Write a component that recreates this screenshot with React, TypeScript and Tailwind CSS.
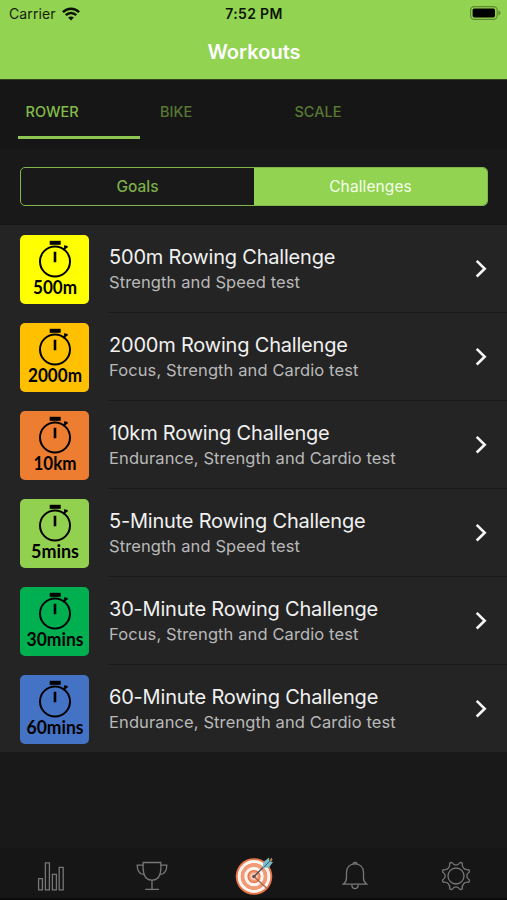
import { useState } from "react";

const tabs = ["ROWER", "BIKE", "SCALE"];

const challenges = [
  { label: "500m", width: 44, color: "bg-[#ffff00]", title: "500m Rowing Challenge", subtitle: "Strength and Speed test" },
  { label: "2000m", width: 54, color: "bg-[#ffc000]", title: "2000m Rowing Challenge", subtitle: "Focus, Strength and Cardio test" },
  { label: "10km", width: 43, color: "bg-[#ed7d31]", title: "10km Rowing Challenge", subtitle: "Endurance, Strength and Cardio test" },
  { label: "5mins", width: 48, color: "bg-[#92d050]", title: "5-Minute Rowing Challenge", subtitle: "Strength and Speed test" },
  { label: "30mins", width: 57, color: "bg-[#00b050]", title: "30-Minute Rowing Challenge", subtitle: "Focus, Strength and Cardio test" },
  { label: "60mins", width: 57, color: "bg-[#4472c4]", title: "60-Minute Rowing Challenge", subtitle: "Endurance, Strength and Cardio test" },
];

function WifiIcon() {
  return (
    <svg width="18" height="14" viewBox="0 0 18 14" fill="none" stroke="#0a1203" strokeWidth="2.6">
      <path d="M0.9 5.2C5.4 0.6 12.6 0.6 17.1 5.2" />
      <path d="M3.8 8.2C6.7 5.3 11.3 5.3 14.2 8.2" />
      <path d="M6.1 10.6C7.8 9 10.2 9 11.9 10.6L9 13.5Z" fill="#0a1203" stroke="none" />
    </svg>
  );
}

function BatteryIcon() {
  return (
    <svg width="31" height="14" viewBox="0 0 31 14">
      <rect x="0.6" y="0.6" width="26.6" height="12.8" rx="3.6" fill="none" stroke="#5f8a33" strokeWidth="1.2" />
      <rect x="2.6" y="2.6" width="22.4" height="8.8" rx="1.6" fill="#000" />
      <path d="M28.4 4.6c1.5.5 2 1.4 2 2.4s-.5 1.9-2 2.4z" fill="#5f8a33" />
    </svg>
  );
}

function TimerTile({ label, width, color }: { label: string; width: number; color: string }) {
  return (
    <div className={`size-[69px] shrink-0 overflow-hidden rounded-[5px] ${color}`}>
      <svg width="69" height="69" viewBox="0 0 69 69">
        <rect x="29.7" y="5.8" width="11" height="4" />
        <circle cx="35" cy="26.5" r="15" fill="none" stroke="#000" strokeWidth="2" />
        <path d="M35 16.7v10.5" stroke="#000" strokeWidth="2.6" />
        <path d="M43.2 15l3.2-3.2M44 11.4l3.600 0.600" stroke="#000" strokeWidth="2.2" />
        <text
          x="35"
          y="58.7"
          textAnchor="middle"
          textLength={width}
          lengthAdjust="spacingAndGlyphs"
          className="font-['Lato',sans-serif] text-[18px] font-bold"
        >
          {label}
        </text>
      </svg>
    </div>
  );
}

function StatsIcon() {
  return (
    <svg width="28" height="30" viewBox="0 0 28 30" fill="none" stroke="#777" strokeWidth="1.3">
      <path d="M1.6 17.7h3.8v11.2H1.6zM8.4 1.9h4v27h-4zM15.4 13.3h4v15.6h-4zM22.2 6.4h4v22.5h-4z" />
    </svg>
  );
}

function TrophyIcon() {
  return (
    <svg width="32" height="30" viewBox="0 0 32 30" fill="none" stroke="#777" strokeWidth="1.3">
      <path d="M7.2 1.5h17.6c.3 4 .2 7.8-.5 10.5-1.1 4.3-4.2 7.2-8.3 7.2s-7.2-2.9-8.3-7.2C7 9.300 6.9 5.500 7.2 1.500z" />
      <path d="M7 4.2H1.2c0 5.200 1.800 8.800 6.600 9.500M25 4.200h5.800c0 5.200-1.800 8.800-6.600 9.500M16 19.200v9.200M9.200 28.400h13.800" />
    </svg>
  );
}

function TargetIcon() {
  return (
    <svg width="40" height="40" viewBox="0 0 40 40" fill="none" className="ml-0.5">
      <circle cx="20" cy="20.500" r="18.300" fill="#e87548" />
      <circle cx="20" cy="20.500" r="14.800" stroke="#fff4ee" strokeWidth="3.200" />
      <circle cx="20" cy="20.500" r="11.500" stroke="#f09a78" strokeWidth="3.400" />
      <circle cx="20" cy="20.500" r="8.200" stroke="#fff4ee" strokeWidth="3.200" />
      <circle cx="20" cy="20.500" r="5.200" fill="#f09a78" />
      <circle cx="20" cy="20.500" r="3.600" fill="#f8cbbb" />
      <circle cx="20" cy="20.500" r="1.800" fill="#8c4a36" />
      <path d="M20 20.500l13 12" stroke="#a96350" strokeWidth="1.300" />
      <path d="M19 21.500L35 5.500" stroke="#40545b" strokeWidth="1.300" />
      <path d="M28.500 11.500l1-5.500L35 1.500l.5 4 3.500.5-4.500 6z" fill="#79bdcd" />
      <path d="M30 11l7-7" stroke="#365f68" />
      <path d="M35.500 5l2-3.500 1 2.500-2 2z" fill="#c08a50" />
    </svg>
  );
}

function BellIcon() {
  return (
    <svg width="26" height="30" viewBox="0 0 26 30" fill="none" stroke="#777" strokeWidth="1.300">
      <path d="M11 3C11 .8 15 .8 15 3M1.200 23.200c2.300-1.800 3.300-3.700 3.300-6.200v-5.500C4.500 6.200 8 2.800 13 2.800s8.500 3.400 8.500 8.700V17c0 2.500 1 4.400 3.300 6.200z" />
      <path d="M9.800 23.500c0 5.500 6.400 5.500 6.400 0" />
    </svg>
  );
}

function GearIcon() {
  return (
    <svg width="30" height="30" viewBox="0 0 30 30" fill="none" stroke="#777" strokeWidth="1.300">
      <circle cx="15" cy="15" r="8" />
      <path d="M8.700 2.200Q10 1 11.300 1.800Q12.600 4.200 15 4.200Q17.400 4.200 18.700 1.800Q20 1 21.300 2.200Q20.800 5.400 22.700 7.300Q24.600 9.200 27.800 8.700Q29 10 28.200 11.300Q25.800 12.600 25.800 15Q25.800 17.400 28.200 18.700Q29 20 27.800 21.300Q24.600 20.800 22.700 22.700Q20.800 24.600 21.300 27.800Q20 29 18.700 28.200Q17.400 25.800 15 25.800Q12.600 25.800 11.300 28.200Q10 29 8.700 27.800Q9.200 24.600 7.300 22.700Q5.400 20.800 2.200 21.300Q1 20 1.800 18.700Q4.200 17.400 4.200 15Q4.200 12.600 1.800 11.300Q1 10 2.200 8.700Q5.400 9.200 7.300 7.300Q9.200 5.400 8.700 2.200z" />
    </svg>
  );
}

export default function App() {
  const [tab, setTab] = useState("ROWER");
  const [view, setView] = useState("Challenges");

  return (
    <div className="flex h-[900px] w-[507px] flex-col overflow-hidden bg-[#191919] font-['Inter',sans-serif]">
      <header className="h-[79px] shrink-0 bg-[#92d352]">
        <div className="grid h-[27px] grid-cols-3 items-center text-[14px] text-[#16210b]">
          <div className="flex items-center gap-1.5 pl-[9px]">
            <span className="tracking-[0.1px]">Carrier</span>
            <WifiIcon />
          </div>
          <div className="pl-px text-center font-semibold tracking-[0.35px] text-[#0c1405]">7:52 PM</div>
          <div className="flex justify-end pr-[6px] pb-px">
            <BatteryIcon />
          </div>
        </div>
        <h1 className="pl-px text-center text-[20px] leading-[50px] font-semibold text-white">Workouts</h1>
      </header>

      <nav className="flex h-[71px] shrink-0 border-t border-[#31451f] bg-[#161616] pl-[18px]">
        {tabs.map((name) => (
          <button key={name} onClick={() => setTab(name)} className="flex w-[134.5px] flex-col text-left">
            <span
              className={`h-[56px] pt-[20.5px] pl-[7.5px] text-[14.5px] leading-[21px] font-medium ${
                tab === name ? "text-[#82bb49]" : "text-[#587933]"
              }`}
            >
              {name}
            </span>
            {tab === name && <span className="h-[3px] w-[122px] bg-[#8dc650]" />}
          </button>
        ))}
      </nav>

      <div className="h-[75px] shrink-0 border-b border-[#151515] px-5 pt-[17px]">
        <div className="flex h-[39px] w-[468px] overflow-hidden rounded-[5px] border border-[#81b84b]">
          {["Goals", "Challenges"].map((name) => (
            <button
              key={name}
              onClick={() => setView(name)}
              className={`flex-1 text-[15.5px] ${
                view === name ? "bg-[#92d352] tracking-[0.1px] text-[#f5ffe9]" : "font-medium text-[#7caf49]"
              }`}
            >
              {name}
            </button>
          ))}
        </div>
      </div>

      <main className="h-[527px] shrink-0 bg-[#242424]">
        {challenges.map((item, i) => (
          <div key={item.title} className="flex h-[88px] items-center pl-5">
            <TimerTile label={item.label} width={item.width} color={item.color} />
            <div
              className={`ml-5 flex h-full flex-1 items-center justify-between pr-[20px] ${
                i < challenges.length - 1 ? "border-b border-[#191919]" : ""
              }`}
            >
              <div className="pt-px">
                <h2 className="text-[20px] leading-[26px] tracking-[-0.2px] text-[#f1f1f1]">{item.title}</h2>
                <p className="text-[16.5px] leading-[25px] tracking-[0.11px] text-[#b9b9b9]">{item.subtitle}</p>
              </div>
              <svg width="12" height="18" viewBox="0 0 12 18" fill="none" stroke="#f4f4f4" strokeWidth="2.6">
                <path d="M1.7 0.9L9.7 8.7l-8 7.8" />
              </svg>
            </div>
          </div>
        ))}
      </main>

      <div className="flex-1" />

      <footer className="grid h-[52px] shrink-0 grid-cols-5 place-items-center border-b-2 border-[#0b0b0b] bg-[#161616] pt-[5px]">
        <StatsIcon />
        <TrophyIcon />
        <TargetIcon />
        <BellIcon />
        <GearIcon />
      </footer>
    </div>
  );
}
